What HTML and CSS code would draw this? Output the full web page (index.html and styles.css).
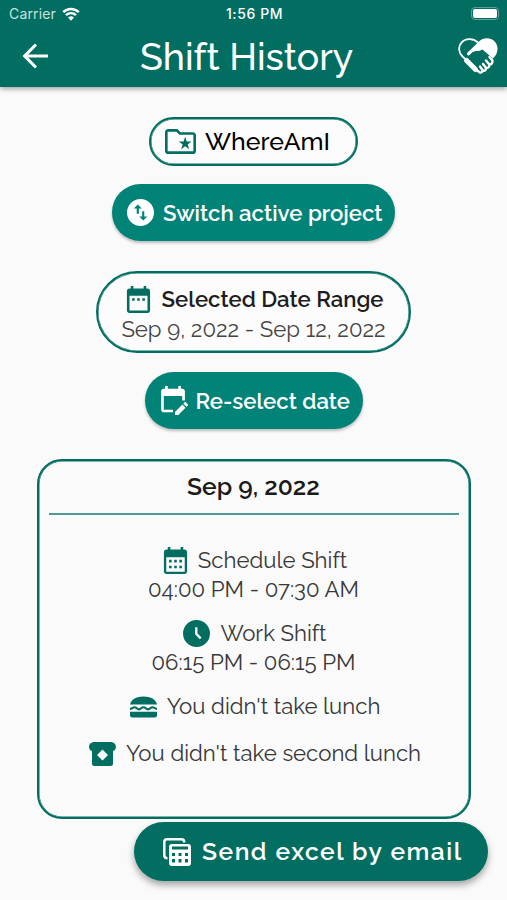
FILE: index.html
```
<!DOCTYPE html>
<html lang="en">
<head>
    <meta charset="UTF-8">
    <meta name="viewport" content="width=device-width, initial-scale=1.0">
    <title>Shift History</title>
    <link rel="stylesheet" href="styles.css">
</head>
<body>
    <header class="app-header">
        <div class="status-bar">
            <div class="carrier">
                <span>Carrier</span>
                <svg class="wifi" viewBox="0 0 18 14">
                    <path d="M1.2 5.2a11 11 0 0 1 15.6 0" />
                    <path d="M4 8.2a7 7 0 0 1 10 0" />
                    <path class="dot" d="M6 10.6a4.3 4.3 0 0 1 6 0l-3 3.2z" />
                </svg>
            </div>
            <span class="time">1:56 PM</span>
            <div class="battery"><div class="level"></div></div>
        </div>
        <div class="title-bar">
            <svg class="back" viewBox="0 0 26 26"><path d="M25 13H2M13 1.5L1.7 13 13 24.5" /></svg>
            <h1>Shift History</h1>
            <svg class="logo" viewBox="0 0 40 37">
                <path class="line" d="M20 4.500C16 .5 8 -.5 3.700 4.300C-.2 8.500 .5 14.500 4.500 18.500L7.800 21.500" />
                <path class="solid" d="M9.500 14.500L20.800 3.700C25-.8 32.500-.9 36.700 3.500C40.800 8 40.300 14.500 36.500 18.800L34.800 20.600L24.500 11.600C20.500 14 16.500 12.400 14.200 14.600L11.600 17C9.800 18.300 8.100 16.300 9.500 14.500Z" />
                <path class="wrist" d="M8.500 22.500L17.500 31.500" />
                <path class="fingers" d="M18.500 32L22 34.500Q24.500 35 24.500 32L22 28.500M24.500 32.500Q28.200 33.500 28 29.800L25 26M28 30Q31.700 30.200 31.300 26.500L28 22.500M31.300 26.800Q35 26 34.400 22.400L31.500 19" />
            </svg>
        </div>
    </header>

    <main>
        <!-- Active project -->
        <div class="pill outlined project">
            <svg class="icon folder" viewBox="2 4 20 16" preserveAspectRatio="none">
                <path d="M20 6h-8l-2-2H4c-1.100 0-2 .9-2 2v12c0 1.100.9 2 2 2h16c1.100 0 2-.9 2-2V8c0-1.100-.9-2-2-2zm.3 12.300H3.700V5.700h5.600l2 2h9zM12.400 17l2.600-1.900 2.600 1.900-1-3.100 2.500-1.900H16l-1-3-1 3h-3.100l2.500 1.900z" />
            </svg>
            <span>WhereAmI</span>
        </div>
        <button class="pill filled switch">
            <svg class="icon" viewBox="2 2 20 20">
                <path fill-rule="evenodd" d="M12 2a10 10 0 1 0 0 20 10 10 0 0 0 0-20zM7 9L10 6 13 9H10.800v4H9.200V9H7zm10 6L14 18 11 15H13.200v-4h1.600v4H17z" />
            </svg>
            <span>Switch active project</span>
        </button>

        <!-- Date range -->
        <div class="pill outlined range">
            <div class="row">
                <svg class="icon calendar" viewBox="3 1 18 21">
                    <path fill-rule="evenodd" d="M19 3h-1V1h-2v2H8V1H6v2H5c-1.100 0-2 .9-2 2v15c0 1.100.9 2 2 2h14c1.100 0 2-.9 2-2V5c0-1.100-.9-2-2-2zm0 17H5V8.500h14V20zM7 10.500h2v2H7zm4 0h2v2h-2zm4 0h2v2h-2z" />
                </svg>
                <span class="label">Selected Date Range</span>
            </div>
            <span class="dates">Sep 9, 2022 - Sep 12, 2022</span>
        </div>
        <button class="pill filled reselect">
            <svg class="icon edit" viewBox="3 1 21 22">
                <path d="M19 3h-1V1h-2v2H8V1H6v2H5c-1.100 0-2 .9-2 2v14c0 1.100.9 2 2 2h7v-2H5V8.500h14V12h2V5c0-1.100-.9-2-2-2zM21.700 13.300l1.500 1.500c.3.300.3.700 0 1l-1 1-2.400-2.400 1-1c.3-.3.700-.3.900-.1zM13.500 20.700l5.600-5.600 2.400 2.400-5.600 5.600h-2.400z" />
            </svg>
            <span>Re-select date</span>
        </button>

        <!-- Day card -->
        <section class="card">
            <h2>Sep 9, 2022</h2>
            <div class="entry schedule">
                <div class="row">
                    <svg class="icon calendar" viewBox="3 1 18 21">
                        <path fill-rule="evenodd" d="M19 3h-1V1h-2v2H8V1H6v2H5c-1.100 0-2 .9-2 2v15c0 1.100.9 2 2 2h14c1.100 0 2-.9 2-2V5c0-1.100-.9-2-2-2zm.2 17.200H4.800V9h14.400zM7 11h2v2H7zm4 0h2v2h-2zm4 0h2v2h-2zM7 15.500h2v2H7zm4 0h2v2h-2zm4 0h2v2h-2z" />
                    </svg>
                    <span class="name">Schedule Shift</span>
                </div>
                <span class="hours">04:00 PM - 07:30 AM</span>
            </div>
            <div class="entry work">
                <div class="row">
                    <svg class="icon" viewBox="0 0 26 26">
                        <circle cx="13" cy="13" r="13" />
                        <path class="hands" d="M12.800 7V13.300L17 17.700" />
                    </svg>
                    <span class="name">Work Shift</span>
                </div>
                <span class="hours">06:15 PM - 06:15 PM</span>
            </div>
            <div class="entry row lunch">
                <svg class="icon" viewBox="0 0 28 22">
                    <path d="M0 8.500C1 3 6.500 0 14 0s13 3 14 8.500z" />
                    <path class="wave" d="M0 13C2.500 13 2.300 11.200 4.700 11.200S7 13.400 9.300 13.400 11.700 11.200 14 11.200s2.300 2.200 4.700 2.200 2.300-2.200 4.600-2.200S25.500 13 28 13" />
                    <path d="M0 16h28v3.500q0 2.500-2.500 2.500h-23Q0 22 0 19.500z" />
                </svg>
                <span class="name">You didn't take lunch</span>
            </div>
            <div class="entry row second">
                <svg class="icon" viewBox="0 0 26 24">
                    <path fill-rule="evenodd" d="M5 0h16C27.500 0 28 8 23.500 9v12.500Q23.500 24 21 24H5Q2.500 24 2.500 21.500V9C-2 8-1.500 0 5 0zM13 7.500L7.500 13l5.500 5.500 5.500-5.500z" />
                </svg>
                <span class="name">You didn't take second lunch</span>
            </div>
        </section>
    </main>

    <button class="fab">
        <svg class="icon" viewBox="0 0 28 28">
            <path class="back-sheet" d="M4.500 20.300Q1.300 20.300 1.300 17V4Q1.300 1.300 4 1.300H18.500Q21.300 1.300 21.300 4.500" />
            <path fill-rule="evenodd" d="M9 6h16q3 0 3 3v16q0 3-3 3H9q-3 0-3-3V9q0-3 3-3zM9 8.500v3h16v-3zM9 15v3h3v-3zm6.500 0v3h3v-3zm6.500 0v3h3v-3zM9 21v3.500h3V21zm6.500 0v3.500h3V21zm6.500 0v3.500h3V21z" />
        </svg>
        <span>Send excel by email</span>
    </button>
</body>
</html>
```
FILE: styles.css
```
* {
    margin: 0;
    padding: 0;
    box-sizing: border-box;
}

body {
    width: 507px;
    height: 900px;
    overflow: hidden;
    background-color: #fafafa;
    font-family: Raleway, Lato, sans-serif;
    color: #1d1d1d;
}

svg {
    display: block;
    flex: none;
}

span, h1, h2 {
    white-space: nowrap;
}

.app-header {
    height: 87px;
    background: #026e62;
    color: #fff;
    box-shadow: 0 2px 5px rgba(0, 0, 0, 0.35);
}

.status-bar {
    height: 27px;
    padding: 0 5px 0 9px;
    display: grid;
    grid-template-columns: 1fr auto 1fr;
    align-items: center;
    font-family: Inter, sans-serif;
    font-size: 14px;
}

.carrier {
    display: flex;
    align-items: center;
    gap: 6px;
    color: #c8e2de;
    letter-spacing: 0.150px;
}

.wifi {
    width: 18px;
    height: 14px;
    fill: none;
    stroke: #fff;
    stroke-width: 2.4;
}

.wifi .dot {
    fill: #fff;
    stroke: none;
}

.time {
    margin-right: 2px;
    font-weight: 500;
    font-size: 14px;
    letter-spacing: 0.600px;
}

.battery {
    justify-self: end;
    width: 28px;
    height: 13px;
    margin-right: 3px;
    padding: 1px;
    border: 1px solid #5f9f97;
    border-radius: 4px;
}

.level {
    height: 100%;
    background: #fff;
    border-radius: 2px;
}

.title-bar {
    height: 60px;
    padding: 0 9px 2px 23px;
    display: flex;
    align-items: center;
}

.back {
    width: 26px;
    height: 26px;
    fill: none;
    stroke: #fff;
    stroke-width: 3;
}

h1 {
    flex: 1;
    margin-left: 91px;
    padding-top: 1px;
    font-size: 37.500px;
    font-weight: 500;
    line-height: 58px;
}

.logo {
    width: 40px;
    height: 37px;
}

.logo .line,
.logo .fingers {
    fill: none;
    stroke: #fff;
    stroke-width: 1.800;
}

.logo .fingers {
    stroke-width: 2.400;
    stroke-linecap: round;
}

.logo .solid {
    fill: #fff;
}

.logo .wrist {
    stroke: #fff;
    stroke-width: 5;
    stroke-linecap: round;
}

main {
    display: flex;
    flex-direction: column;
    align-items: center;
    padding-top: 30px;
}

.icon {
    width: 27px;
    height: 27px;
    fill: #026e62;
}

.calendar {
    width: 25px;
}

.row {
    display: flex;
    align-items: center;
    justify-content: center;
    gap: 10px;
    padding-left: 3px;
}

.pill {
    display: flex;
    align-items: center;
    border: none;
    font-family: inherit;
}

.outlined {
    border: 2px solid #026e62;
    background: #fcfcfc;
    box-shadow: inset 0 0 0 0.500px #026e62;
}

.filled {
    height: 57px;
    border-radius: 29px;
    background: #018377;
    color: #fff;
    font-size: 22.200px;
    font-weight: 600;
    box-shadow: 0 2px 3px rgba(0, 0, 0, 0.25);
}

.filled .icon {
    fill: #fff;
}

.project {
    width: 209px;
    height: 49px;
    padding-left: 14px;
    gap: 9px;
    border-radius: 25px;
    font-size: 24.900px;
    font-weight: 500;
    color: #000;
}

.project .folder {
    width: 31px;
    height: 25px;
}

.switch {
    width: 283px;
    margin-top: 18px;
    padding-left: 15px;
    gap: 9px;
}

.range {
    width: 315px;
    height: 82px;
    margin-top: 30px;
    padding-top: 4px;
    flex-direction: column;
    justify-content: center;
    border-radius: 41px;
    font-size: 22.200px;
}

.range .row {
    height: 29px;
}

.range .label {
    font-weight: 600;
}

.dates {
    line-height: 30px;
    color: #444;
}

.reselect {
    width: 218px;
    margin-top: 19px;
    padding-left: 16px;
    gap: 7px;
}

.edit {
    width: 28px;
    height: 29px;
}

.card {
    width: 434px;
    height: 360px;
    margin-top: 30px;
    padding: 0 10px;
    border: 2px solid #026e62;
    box-shadow: inset 0 0 0 0.500px #026e62;
    border-radius: 25px;
    font-size: 22.200px;
    color: #383838;
}

h2 {
    height: 54px;
    border-bottom: 2px solid #4a9d92;
    line-height: 51px;
    text-align: center;
    font-size: 24.600px;
    font-weight: 600;
    color: #1a1a1a;
}

.entry {
    text-align: center;
    line-height: 29px;
}

.schedule {
    margin-top: 31px;
}

.work {
    margin-top: 15px;
}

.hands {
    fill: none;
    stroke: #fff;
    stroke-width: 2.200;
}

.lunch {
    margin-top: 15px;
}

.lunch .icon {
    height: 22px;
}

.wave {
    fill: none;
    stroke: #026e62;
    stroke-width: 2.200;
}

.second {
    margin-top: 18px;
}

.second .icon {
    height: 24px;
}

.fab {
    position: absolute;
    left: 134px;
    top: 822px;
    width: 354px;
    height: 59px;
    padding-left: 29px;
    display: flex;
    align-items: center;
    gap: 11px;
    border: none;
    border-radius: 30px;
    background: #026e62;
    color: #fff;
    font-family: inherit;
    font-size: 24.600px;
    font-weight: 600;
    letter-spacing: 1.500px;
    box-shadow: 0 4px 7px rgba(0, 0, 0, 0.35);
}

.fab .icon {
    width: 28px;
    height: 28px;
    fill: #fff;
}

.back-sheet {
    fill: none;
    stroke: #fff;
    stroke-width: 2.500;
}
```
